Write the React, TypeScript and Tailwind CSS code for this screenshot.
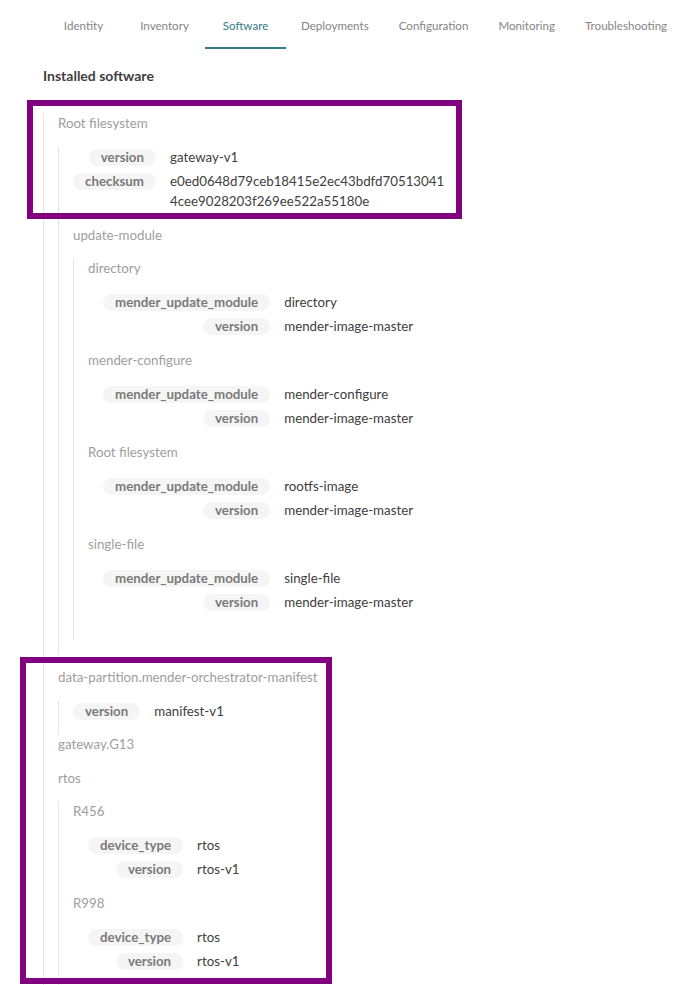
import React from "react";

type TreeItem = {
  title: string;
  kv?: [string, string][];
  items?: TreeItem[];
  line?: boolean;
  endPad?: boolean;
  tight?: boolean;
  after?: string;
};

const tabs = ["Identity", "Inventory", "Software", "Deployments", "Configuration", "Monitoring", "Troubleshooting"];

const moduleRows = (name: string): [string, string][] => [
  ["mender_update_module", name],
  ["version", "mender-image-master"],
];

const rtosRows: [string, string][] = [
  ["device_type", "rtos"],
  ["version", "rtos-v1"],
];

const tree: TreeItem[] = [
  {
    title: "Root filesystem",
    line: true,
    endPad: true,
    after: "mb-[13px]",
    kv: [
      ["version", "gateway-v1"],
      ["checksum", "e0ed0648d79ceb18415e2ec43bdfd705130414cee9028203f269ee522a55180e"],
    ],
    items: [
      {
        title: "update-module",
        line: true,
        endPad: true,
        tight: true,
        items: [
          { title: "directory", kv: moduleRows("directory") },
          { title: "mender-configure", kv: moduleRows("mender-configure") },
          { title: "Root filesystem", kv: moduleRows("rootfs-image") },
          { title: "single-file", kv: moduleRows("single-file") },
        ],
      },
    ],
  },
  {
    title: "data-partition.mender-orchestrator-manifest",
    line: true,
    after: "mb-[-1px]",
    kv: [["version", "manifest-v1"]],
  },
  { title: "gateway.G13" },
  {
    title: "rtos",
    line: true,
    tight: true,
    items: [
      { title: "R456", kv: rtosRows },
      { title: "R998", kv: rtosRows },
    ],
  },
];

function KeyValues({ rows }: { rows: [string, string][] }) {
  return (
    <div className="grid w-fit grid-cols-[auto_minmax(0,279px)] gap-x-[14px] gap-y-1 pb-[14px]">
      {rows.map(([k, v]) => (
        <React.Fragment key={k}>
          <span className="mt-[2px] self-start justify-self-end rounded-full bg-[#f5f5f5] px-3 text-[13.3px] font-bold leading-[17px] text-[#7a7a7a]">
            {k}
          </span>
          <span className="break-all text-[13.3px] leading-5 text-[#404040]">{v}</span>
        </React.Fragment>
      ))}
    </div>
  );
}

function Node({ item }: { item: TreeItem }) {
  return (
    <div className={`flex flex-col ${item.after ?? ""}`}>
      <div className="text-[13.3px] leading-5 text-[#9e9e9e]">{item.title}</div>
      <div
        className={`flex flex-col border-l pl-[14px] ${item.tight ? "mt-[13px]" : "mt-[14px]"} ${
          item.line ? "border-[#e6e6e6]" : "border-transparent"
        } ${item.endPad ? "pb-[14px]" : ""}`}
      >
        {item.kv && <KeyValues rows={item.kv} />}
        {item.items?.map((child) => (
          <Node key={child.title + (child.kv?.[0]?.[1] ?? "")} item={child} />
        ))}
      </div>
    </div>
  );
}

export default function App() {
  return (
    <div className="relative h-[985px] overflow-hidden bg-white font-['Lato',sans-serif]">
      <div className="flex pl-[43px]">
        {tabs.map((t) => {
          const active = t === "Software";
          return (
            <div
              key={t}
              className={`relative flex h-[49px] min-w-[81px] items-center justify-center px-[15px] pt-[3px] text-[11.6px] ${
                active ? "text-[#337a87]" : "text-[#858585]"
              }`}
            >
              {t}
              {active && <span className="absolute bottom-0 left-0 right-0 h-[2px] bg-[#337a87]" />}
            </div>
          );
        })}
      </div>

      <div className="px-[43px] pt-[17px]">
        <h2 className="text-[14px] font-bold leading-5 text-[#404040]">Installed software</h2>
        <div className="mt-[27px] flex flex-col border-l border-[#e6e6e6] pl-[14px]">
          {tree.map((item) => (
            <Node key={item.title} item={item} />
          ))}
        </div>
      </div>

      <div className="pointer-events-none absolute left-[27px] top-[100px] h-[119px] w-[435px] border-[6px] border-[#800080]" />
      <div className="pointer-events-none absolute left-[20px] top-[657px] h-[327px] w-[312px] border-[6px] border-[#800080]" />
    </div>
  );
}
